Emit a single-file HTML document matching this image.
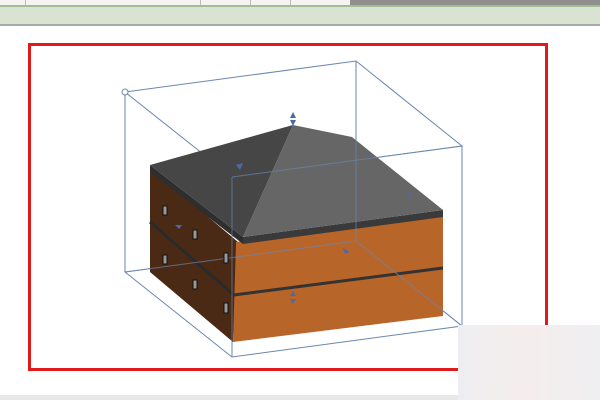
<!DOCTYPE html><html><head><style>body{margin:0;width:600px;height:400px;overflow:hidden;background:#fff;position:relative;font-family:"Liberation Sans","Noto Sans CJK SC",sans-serif}
.a{position:absolute}</style></head><body>
<div class="a" style="left:0;top:0;width:600px;height:6px;background:#f4f4f4"></div>
<div class="a" style="left:350px;top:0;width:250px;height:6px;background:#8f8f8f"></div>
<div class="a" style="left:25px;top:0;width:1px;height:6px;background:#bbb"></div>
<div class="a" style="left:200px;top:0;width:1px;height:6px;background:#bbb"></div>
<div class="a" style="left:250px;top:0;width:1px;height:6px;background:#bbb"></div>
<div class="a" style="left:290px;top:0;width:1px;height:6px;background:#bbb"></div>
<div class="a" style="left:0;top:5px;width:600px;height:2px;background:#a3bd93"></div>
<div class="a" style="left:0;top:7px;width:600px;height:17px;background:#d8e3d1"></div>
<div class="a" style="left:0;top:24px;width:600px;height:2px;background:#a9a9a9"></div>
<div class="a" style="left:28px;top:43px;width:514px;height:322px;border:3px solid #e01a1a"></div>
<svg class="a" style="left:0;top:0" width="600" height="400">
<g stroke="#6a86b0" stroke-width="1" fill="none">
<polygon points="125,92 356,61 462,146 232,177"/>
<polygon points="125,272 356,241 462,326 232,357"/>
<line x1="125" y1="92" x2="125" y2="272"/><line x1="356" y1="61" x2="356" y2="241"/>
<line x1="462" y1="146" x2="462" y2="326"/><line x1="232" y1="177" x2="232" y2="357"/>
</g>
<polygon points="150,168 238,242 233,342 150,272" fill="#4a2a14"/>
<polygon points="236,242 443,214 443,316 233,342" fill="#b8652a"/>
<line x1="150" y1="222" x2="234" y2="295" stroke="#2a2a2a" stroke-width="3"/>
<line x1="234" y1="295" x2="443" y2="268" stroke="#333" stroke-width="3"/>
<polygon points="150,165 243,237 243,244 150,172" fill="#2e2e2e"/>
<polygon points="243,237 443,210 443,217 243,244" fill="#3a3a3a"/>
<polygon points="150,165 293,125 243,237" fill="#464646"/>
<polygon points="293,125 352,137 443,210 243,237" fill="#666"/>
<g stroke="#6a86b0" stroke-width="1" fill="none" opacity=".7">
<line x1="232" y1="177" x2="462" y2="146"/><line x1="232" y1="177" x2="232" y2="357"/>
<line x1="125" y1="272" x2="356" y2="241"/><line x1="356" y1="61" x2="356" y2="241"/><line x1="356" y1="241" x2="462" y2="326"/>
</g>
<circle cx="125" cy="92" r="3" fill="#fff" stroke="#6a86b0"/>
<g fill="#999" stroke="#111" stroke-width="1">
<rect x="163" y="206" width="4" height="9"/><rect x="193" y="230" width="4" height="9"/><rect x="224" y="253" width="4" height="10"/>
<rect x="163" y="255" width="4" height="9"/><rect x="193" y="280" width="4" height="9"/><rect x="224" y="303" width="4" height="10"/>
</g>
<g fill="#4a6aa8"><polygon points="290,118 296,118 293,112"/><polygon points="290,120 296,120 293,126"/>
<polygon points="290,296 296,296 293,291"/><polygon points="290,299 296,299 293,304"/>
<polygon points="236,165 243,163 240,170"/><polygon points="343,248 350,252 345,254"/><polygon points="405,193 412,193 409,197"/><polygon points="175,225 182,225 179,229"/></g>
<rect x="0" y="395" width="600" height="5" fill="#e8e8e8"/>
</svg>
<div class="a" style="left:458px;top:325px;width:142px;height:75px;background:linear-gradient(90deg,#eeeef0,#f5eded 50%,#efeff1)"></div>
</body></html>
